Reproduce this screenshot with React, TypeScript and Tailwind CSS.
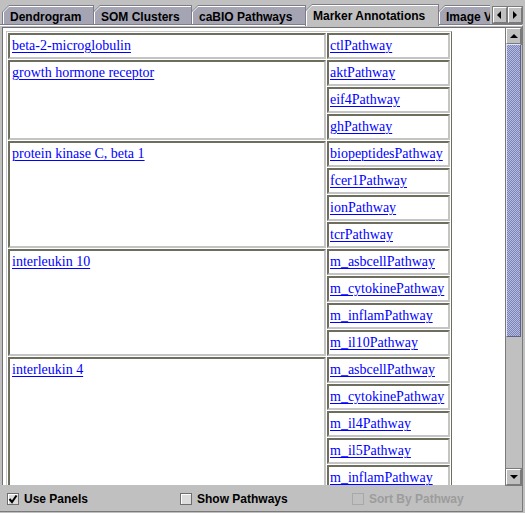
import React from "react";

const rows: { gene: string; pathways: string[] }[] = [
  { gene: "beta-2-microglobulin", pathways: ["ctlPathway"] },
  { gene: "growth hormone receptor", pathways: ["aktPathway", "eif4Pathway", "ghPathway"] },
  {
    gene: "protein kinase C, beta 1",
    pathways: ["biopeptidesPathway", "fcer1Pathway", "ionPathway", "tcrPathway"],
  },
  {
    gene: "interleukin 10",
    pathways: ["m_asbcellPathway", "m_cytokinePathway", "m_inflamPathway", "m_il10Pathway"],
  },
  {
    gene: "interleukin 4",
    pathways: ["m_asbcellPathway", "m_cytokinePathway", "m_il4Pathway", "m_il5Pathway", "m_inflamPathway"],
  },
];

const tabs = [
  { label: "Dendrogram", w: "w-[92px]" },
  { label: "SOM Clusters", w: "w-[99px]" },
  { label: "caBIO Pathways", w: "w-[115px]" },
  { label: "Marker Annotations", w: "w-[134px]", active: true },
  { label: "Image Viewer", w: "w-[90px]" },
];

function Tab({ label, w, active }: { label: string; w: string; active?: boolean }) {
  return (
    <div
      className={`relative -mr-px shrink-0 ${w} ${active ? "h-[22px] z-10" : "h-[21px]"} bg-[#7c7c8a] [clip-path:polygon(7px_0,100%_0,100%_100%,0_100%,0_7px)]`}
    >
      <div className="absolute inset-[1px_1px_0_1px] bg-white [clip-path:polygon(6px_0,100%_0,100%_100%,0_100%,0_6px)]">
        <div
          className={`absolute inset-[1px_0_0_1px] ${active ? "bg-[#c0c0c0]" : "bg-[#a4a4b2]"} [clip-path:polygon(5px_0,100%_0,100%_100%,0_100%,0_5px)] flex items-center pl-[6px] text-[12px] font-bold text-black whitespace-nowrap`}
        >
          {label}
        </div>
      </div>
    </div>
  );
}

function Arrow({ dir }: { dir: "up" | "down" | "left" | "right" }) {
  const pts = {
    up: "1,6 5,2 9,6",
    down: "1,2 9,2 5,6",
    left: "6,1 6,9 2,5",
    right: "3,1 3,9 7,5",
  }[dir];
  const vert = dir === "up" || dir === "down";
  return (
    <svg width="10" height={vert ? 8 : 10} viewBox={vert ? "0 0 10 8" : "0 0 10 10"}>
      <polygon points={pts} fill="#000" />
    </svg>
  );
}

function Btn({ dir, cls }: { dir: "up" | "down" | "left" | "right"; cls: string }) {
  return (
    <div
      className={`${cls} flex items-center justify-center bg-[#c0c0c0] border border-t-white border-l-white border-r-[#7a7a7a] border-b-[#7a7a7a] outline outline-1 outline-[#7a7a7a]`}
    >
      <Arrow dir={dir} />
    </div>
  );
}

function Check({ label, checked, disabled }: { label: string; checked?: boolean; disabled?: boolean }) {
  return (
    <div className="flex items-center gap-[5px]">
      <div
        className={`w-[12px] h-[12px] border flex items-center justify-center ${
          disabled ? "border-[#a8a8a8] bg-[#c0c0c0]" : "border-[#6e6e6e] bg-[#dcdcdc] shadow-[inset_1px_1px_0_#ffffff]"
        }`}
      >
        {checked && (
          <svg width="10" height="10" viewBox="0 0 10 10">
            <path d="M1.5 5 L4 8 L8.5 1.5" stroke="#000" strokeWidth="2" fill="none" />
          </svg>
        )}
      </div>
      <span className={`text-[12px] font-bold ${disabled ? "text-[#9c9c9c]" : "text-black"}`}>{label}</span>
    </div>
  );
}

const cell =
  "p-0 align-top border-2 border-t-[#6e6e5e] border-l-[#6e6e5e] border-b-[#c4c4c4] border-r-[#c4c4c4]";
const link = "text-[#0000ff] underline underline-offset-[2px] decoration-1";

export default function App() {
  return (
    <div className="w-[525px] h-[513px] bg-[#c0c0c0] flex flex-col overflow-hidden font-['Liberation_Sans',Arial,sans-serif]">
      {/* Tab strip */}
      <div className="relative h-[26px] shrink-0">
        <div className="absolute left-[2px] bottom-0 w-[488px] overflow-hidden flex items-end">
          {tabs.map((t) => (
            <Tab key={t.label} {...t} />
          ))}
        </div>
        <div className="absolute left-0 right-[3px] bottom-[1px] h-px bg-[#7c7c8a]" />
        <div className="absolute left-0 right-[3px] bottom-0 h-px bg-white" />
        <div className="absolute left-[493px] top-[7px] flex">
          <Btn dir="left" cls="w-[14px] h-[16px]" />
          <Btn dir="right" cls="w-[14px] h-[16px] ml-px" />
        </div>
      </div>

      {/* Tab content */}
      <div className="w-[523px] flex-1 min-h-0 flex flex-col pl-[2px] border-r border-b border-[#7a7a7a]">
        {/* Scroll pane */}
        <div className="w-[519px] h-[458px] mt-[1px] flex border-t border-l border-[#707070] bg-white">
          <div className="flex-1 min-w-0 overflow-hidden pl-[3px] pt-[3px] font-['Liberation_Serif','Times_New_Roman',serif] text-[14px]">
            <table className="border-separate border-spacing-[1px] border border-t-[#c8c8c8] border-l-[#c8c8c8] border-r-[#6e6e5e] border-b-[#6e6e5e]">
              <tbody>
                {rows.map((r) =>
                  r.pathways.map((p, i) => (
                    <tr key={r.gene + p}>
                      {i === 0 && (
                        <td rowSpan={r.pathways.length} className={`${cell} w-[318px]`}>
                          <div className="h-[22px] leading-[22px] pl-[2px]">
                            <span className={link}>{r.gene}</span>
                          </div>
                        </td>
                      )}
                      <td className={`${cell} w-[123px]`}>
                        <div className="h-[22px] leading-[22px] pl-[1px] whitespace-nowrap overflow-hidden">
                          <span className={link}>{p}</span>
                        </div>
                      </td>
                    </tr>
                  ))
                )}
              </tbody>
            </table>
          </div>

          {/* Scrollbar */}
          <div className="w-[16px] shrink-0 flex flex-col bg-[#c0c0c0] border-l border-[#7a7a7a]">
            <Btn dir="up" cls="h-[16px] w-full" />
            <div className="h-[293px] border border-t-[#e0e4f8] border-l-[#e0e4f8] border-r-[#5c628c] border-b-[#5c628c] bg-[#a6aed6] bg-[repeating-conic-gradient(#7c84b4_0%_25%,#b4bce4_0%_50%)] bg-[length:2px_2px]" />
            <div className="flex-1" />
            <Btn dir="down" cls="h-[16px] w-full" />
          </div>
        </div>

        {/* Bottom options */}
        <div className="flex-1 flex items-center pl-[5px] pt-[1px]">
          <div className="w-[173px]">
            <Check label="Use Panels" checked />
          </div>
          <div className="w-[172px]">
            <Check label="Show Pathways" />
          </div>
          <Check label="Sort By Pathway" disabled />
        </div>
      </div>
      <div className="h-[1px]" />
    </div>
  );
}
